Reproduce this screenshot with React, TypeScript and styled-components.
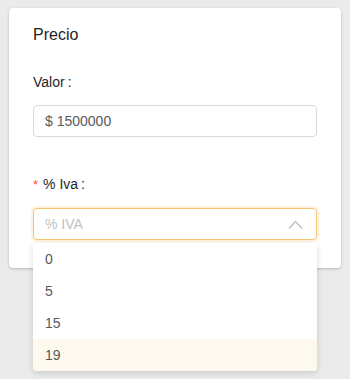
import styled, { createGlobalStyle } from "styled-components";

const GlobalStyle = createGlobalStyle`
  body {
    margin: 0;
    background: #ebebeb;
    font-family: "Liberation Sans", Arial, sans-serif;
  }
`;

const Page = styled.div`
  padding: 8px 9px;
  height: 379px;
  box-sizing: border-box;
`;

const Card = styled.section`
  position: relative;
  background: #fff;
  border-radius: 4px;
  box-shadow: 0 1px 3px rgba(0, 0, 0, 0.22);
  padding: 16px 24px 28px;
`;

const Title = styled.h2`
  margin: 0 0 25px;
  font-size: 16px;
  font-weight: 400;
  line-height: 22px;
  color: #1f1f1f;
`;

const Field = styled.div<{ $last?: boolean }>`
  margin-bottom: ${(p) => (p.$last ? "0" : "36px")};
  position: relative;
`;

const Label = styled.label`
  display: block;
  font-size: 14px;
  line-height: 22px;
  color: #262626;
  margin-bottom: 12px;
`;

const Required = styled.span`
  color: #ff4d4f;
  font-size: 13px;
  margin-right: 5px;
`;

const Colon = styled.span`
  margin-left: 3px;
`;

const Input = styled.div`
  height: 32px;
  box-sizing: border-box;
  border: 1px solid #d9d9d9;
  border-radius: 4px;
  padding: 0 11px;
  display: flex;
  align-items: center;
  font-size: 14px;
  color: #595959;
`;

const Select = styled(Input)`
  border-color: #f9c46e;
  box-shadow: 0 0 0 2px rgba(255, 196, 100, 0.2);
  justify-content: space-between;
  color: #bfbfbf;
  padding-right: 13px;
`;

const Dropdown = styled.ul`
  position: absolute;
  left: 0;
  right: 0;
  top: 70px;
  margin: 0;
  padding: 0;
  list-style: none;
  background: #fff;
  border-radius: 4px;
  box-shadow: 0 2px 6px rgba(0, 0, 0, 0.15);
  overflow: hidden;
  z-index: 10;
`;

const Option = styled.li<{ $active?: boolean }>`
  height: 32px;
  display: flex;
  align-items: center;
  padding: 0 12px;
  font-size: 14px;
  color: #595959;
  background: ${(p) => (p.$active ? "#fef9ee" : "#fff")};
`;

const options = ["0", "5", "15", "19"];

export default function App() {
  return (
    <Page>
      <GlobalStyle />
      <Card>
        <Title>Precio</Title>
        <Field>
          <Label>
            Valor<Colon>:</Colon>
          </Label>
          <Input>$ 1500000</Input>
        </Field>
        <Field $last>
          <Label>
            <Required>*</Required>% Iva<Colon>:</Colon>
          </Label>
          <Select>
            <span>% IVA</span>
            <svg width="15" height="9" viewBox="0 0 15 9" fill="none">
              <path d="M1 8.5 L7.5 1.5 L14 8.5" stroke="#bfbfbf" strokeWidth="1.3" />
            </svg>
          </Select>
          <Dropdown>
            {options.map((o) => (
              <Option key={o} $active={o === "19"}>
                {o}
              </Option>
            ))}
          </Dropdown>
        </Field>
      </Card>
    </Page>
  );
}
